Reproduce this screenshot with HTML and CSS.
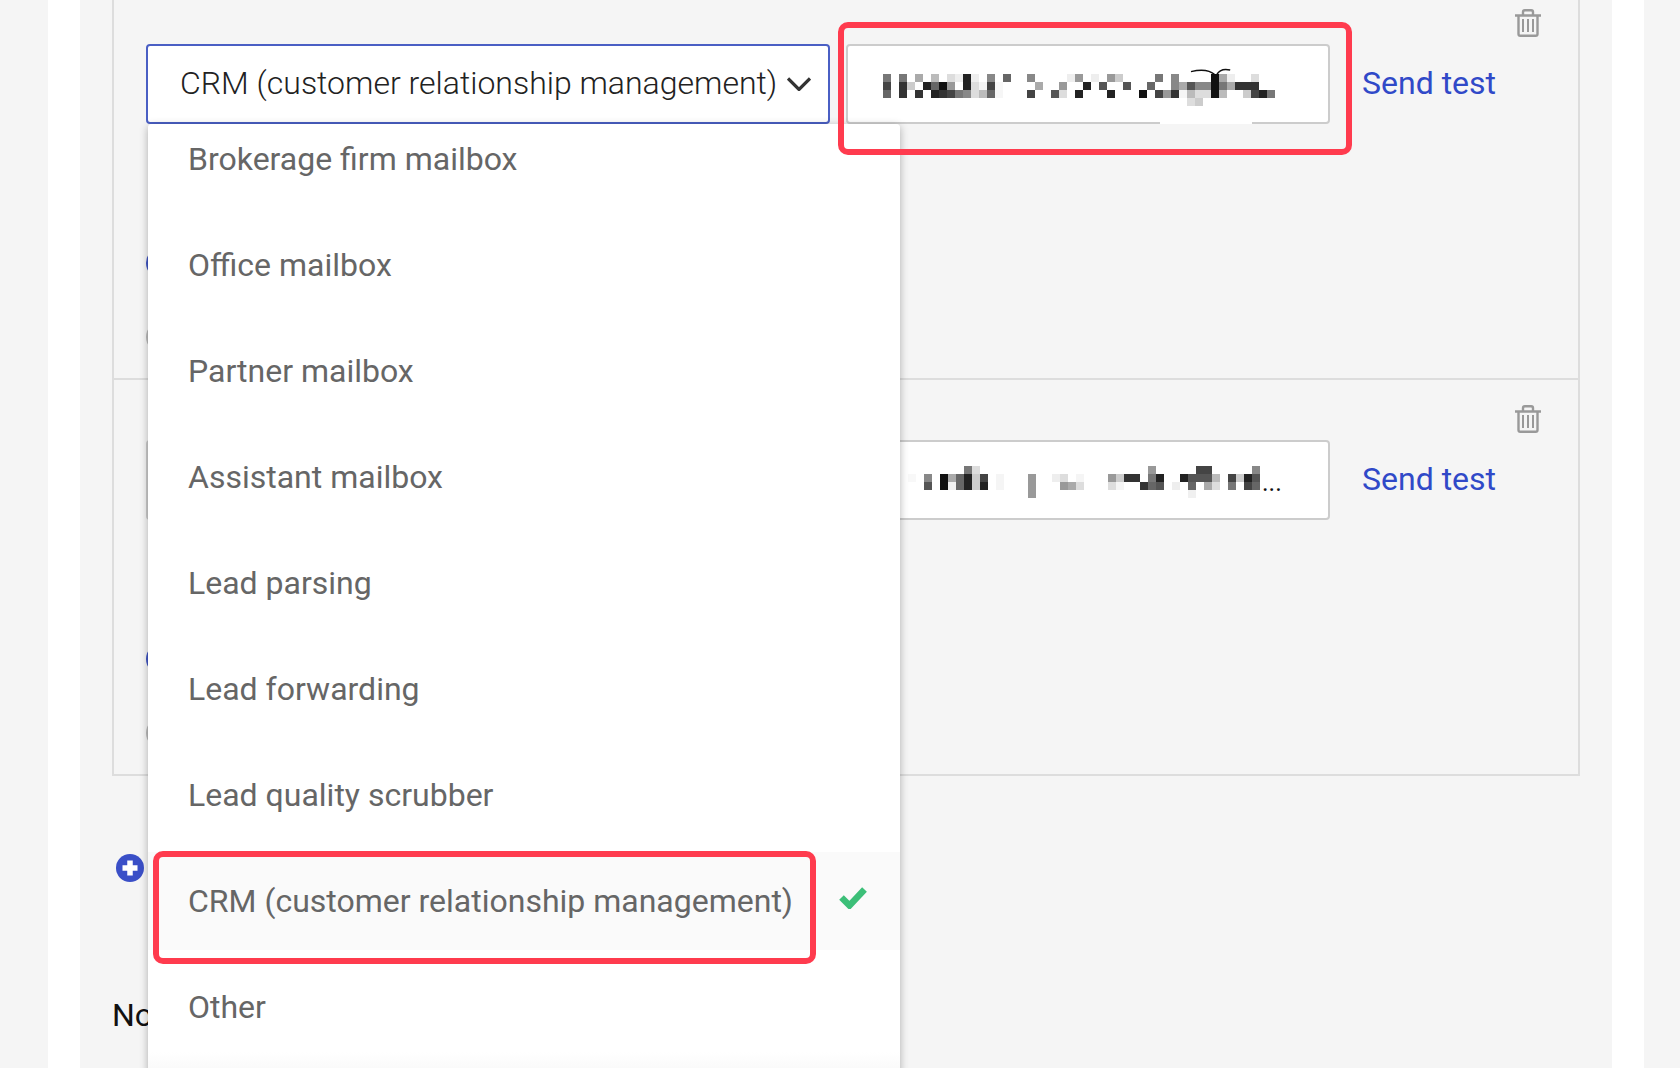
FILE: index.html
```html
<!DOCTYPE html>
<html lang="en">
<head>
<meta charset="utf-8">
<title>Mailbox settings</title>
<link rel="stylesheet" href="styles.css">
</head>
<body>
<div class="page">
  <main class="content">
    <section class="panel">
      <div class="row">
        <button class="trash" aria-label="Delete"><svg width="26" height="28" viewBox="0 0 26 28"><g fill="none" stroke="#999" stroke-width="2.400"><path d="M0 6.500h26M8 6.500V3q0-1.800 1.800-1.800h6.400q1.800 0 1.800 1.800v3.500M3.500 6.500V25q0 1.800 1.800 1.800h15.400q1.800 0 1.800-1.800V6.500"/></g><path d="M8 10v13M13 10v13M18 10v13" stroke="#999" stroke-width="2"/></svg></button>
        <div class="fields">
          <div class="select select-open">
            <span class="select-label">CRM (customer relationship management)</span>
            <svg class="chevron" width="24" height="14" viewBox="0 0 24 14"><path d="M1 1.500l11 11 11-11" fill="none" stroke="#333" stroke-width="3.200"/></svg>
          </div>
          <div class="input input-a">
            <svg class="mosaic" width="416" height="64" viewBox="0 -2.750 52 8">
              <rect x="0" y="0" fill="#777"/><rect x="2" y="0" fill="#777"/><rect x="4" y="0" fill="#aaa"/><rect x="6" y="0" fill="#bbb"/><rect x="8" y="0" fill="#ddd"/><rect x="9" y="0" fill="#eee"/><rect x="10" y="0" fill="#222"/><rect x="11" y="0" fill="#eee"/><rect x="13" y="0" fill="#888"/><rect x="15" y="0" fill="#666"/><rect x="18" y="0" fill="#888"/><rect x="23" y="0" fill="#eee"/><rect x="24" y="0" fill="#999"/><rect x="26" y="0" fill="#eee"/><rect x="28" y="0" fill="#999"/><rect x="29" y="0" fill="#ccc"/><rect x="34" y="0" fill="#777"/><rect x="36" y="0" fill="#888"/><rect x="41" y="0" fill="#111"/><rect x="42" y="0" fill="#aaa"/><rect x="43" y="0" fill="#eee"/><rect x="46" y="0" fill="#ddd"/>
              <rect x="0" y="1" fill="#444"/><rect x="2" y="1" fill="#333"/><rect x="3" y="1" fill="#ccc"/><rect x="5" y="1" fill="#222"/><rect x="6" y="1" fill="#666"/><rect x="7" y="1" fill="#111"/><rect x="8" y="1" fill="#999"/><rect x="10" y="1" fill="#222"/><rect x="11" y="1" fill="#ddd"/><rect x="12" y="1" fill="#f4f4f4"/><rect x="13" y="1" fill="#444"/><rect x="14" y="1" fill="#f8f8f8"/><rect x="19" y="1" fill="#aaa"/><rect x="22" y="1" fill="#999"/><rect x="25" y="1" fill="#222"/><rect x="27" y="1" fill="#555"/><rect x="30" y="1" fill="#555"/><rect x="33" y="1" fill="#666"/><rect x="36" y="1" fill="#888"/><rect x="37" y="1" fill="#aaa"/><rect x="38" y="1" fill="#555"/><rect x="39" y="1" fill="#888"/><rect x="40" y="1" fill="#888"/><rect x="41" y="1" fill="#111"/><rect x="42" y="1" fill="#777"/><rect x="43" y="1" fill="#aaa"/><rect x="44" y="1" fill="#333"/><rect x="45" y="1" fill="#333"/><rect x="46" y="1" fill="#333"/>
              <rect x="0" y="2" fill="#666"/><rect x="2" y="2" fill="#333"/><rect x="4" y="2" fill="#333"/><rect x="6" y="2" fill="#222"/><rect x="7" y="2" fill="#333"/><rect x="8" y="2" fill="#444"/><rect x="9" y="2" fill="#777"/><rect x="10" y="2" fill="#888"/><rect x="11" y="2" fill="#ddd"/><rect x="12" y="2" fill="#bbb"/><rect x="13" y="2" fill="#666"/><rect x="14" y="2" fill="#f6f6f6"/><rect x="18" y="2" fill="#444"/><rect x="21" y="2" fill="#555"/><rect x="22" y="2" fill="#ddd"/><rect x="24" y="2" fill="#222"/><rect x="28" y="2" fill="#222"/><rect x="32" y="2" fill="#111"/><rect x="34" y="2" fill="#444"/><rect x="35" y="2" fill="#999"/><rect x="36" y="2" fill="#333"/><rect x="37" y="2" fill="#f5f5f5"/><rect x="38" y="2" fill="#bbb"/><rect x="39" y="2" fill="#ddd"/><rect x="40" y="2" fill="#ddd"/><rect x="41" y="2" fill="#111"/><rect x="42" y="2" fill="#bbb"/><rect x="45" y="2" fill="#ccc"/><rect x="46" y="2" fill="#444"/><rect x="47" y="2" fill="#222"/><rect x="48" y="2" fill="#777"/>
              <rect x="38" y="3" fill="#ddd"/><rect x="39" y="3" fill="#ccc"/>
              <path d="M38.500-.3q2-.5 3 .4M41.700.1q.5-.9 1.700-.6" fill="none" stroke="#111" stroke-width=".18"/>
            </svg>
            <span class="input-notch"></span>
          </div>
          <a class="send" href="#">Send test</a>
        </div>
        <div class="radios"><span class="radio radio-on"></span><span class="radio"></span></div>
      </div>
      <div class="row">
        <button class="trash" aria-label="Delete"><svg width="26" height="28" viewBox="0 0 26 28"><g fill="none" stroke="#999" stroke-width="2.400"><path d="M0 6.500h26M8 6.500V3q0-1.800 1.800-1.800h6.400q1.800 0 1.800 1.800v3.500M3.500 6.500V25q0 1.800 1.800 1.800h15.400q1.800 0 1.800-1.800V6.500"/></g><path d="M8 10v13M13 10v13M18 10v13" stroke="#999" stroke-width="2"/></svg></button>
        <div class="fields">
          <div class="select"></div>
          <div class="input input-b">
            <svg class="mosaic" width="354" height="64" viewBox="0 -2.250 44.250 8">
              <rect x="7" y="0" fill="#777"/><rect x="8" y="0" fill="#ddd"/><rect x="30" y="0" fill="#999"/><rect x="36" y="0" fill="#444"/><rect x="37" y="0" fill="#444"/><rect x="43" y="0" fill="#888"/>
              <rect x="0" y="1" fill="#f8f8f8"/><rect x="2" y="1" fill="#888"/><rect x="4" y="1" fill="#111"/><rect x="5" y="1" fill="#aaa"/><rect x="6" y="1" fill="#666"/><rect x="7" y="1" fill="#222"/><rect x="8" y="1" fill="#ccc"/><rect x="9" y="1" fill="#444"/><rect x="11" y="1" fill="#f5f5f5"/><rect x="15" y="1" fill="#999"/><rect x="18" y="1" fill="#eee"/><rect x="19" y="1" fill="#ddd"/><rect x="21" y="1" fill="#f5f5f5"/><rect x="25" y="1" fill="#999"/><rect x="26" y="1" fill="#ccc"/><rect x="27" y="1" fill="#333"/><rect x="28" y="1" fill="#333"/><rect x="30" y="1" fill="#777"/><rect x="31" y="1" fill="#222"/><rect x="34" y="1" fill="#222"/><rect x="35" y="1" fill="#555"/><rect x="36" y="1" fill="#555"/><rect x="37" y="1" fill="#555"/><rect x="38" y="1" fill="#bbb"/><rect x="40" y="1" fill="#444"/><rect x="41" y="1" fill="#ccc"/><rect x="42" y="1" fill="#222"/><rect x="43" y="1" fill="#555"/>
              <rect x="2" y="2" fill="#555"/><rect x="4" y="2" fill="#111"/><rect x="5" y="2" fill="#f0f0f0"/><rect x="6" y="2" fill="#666"/><rect x="7" y="2" fill="#222"/><rect x="8" y="2" fill="#ccc"/><rect x="9" y="2" fill="#222"/><rect x="11" y="2" fill="#f5f5f5"/><rect x="15" y="2" fill="#999"/><rect x="19" y="2" fill="#999"/><rect x="20" y="2" fill="#aaa"/><rect x="21" y="2" fill="#ddd"/><rect x="25" y="2" fill="#ddd"/><rect x="26" y="2" fill="#f5f5f5"/><rect x="29" y="2" fill="#333"/><rect x="30" y="2" fill="#666"/><rect x="31" y="2" fill="#555"/><rect x="33" y="2" fill="#eee"/><rect x="35" y="2" fill="#666"/><rect x="37" y="2" fill="#aaa"/><rect x="38" y="2" fill="#ddd"/><rect x="40" y="2" fill="#777"/><rect x="42" y="2" fill="#444"/><rect x="43" y="2" fill="#666"/>
              <rect x="15" y="3" fill="#999"/><rect x="35" y="3" fill="#f0f0f0"/>
            </svg>
            <span class="dots">...</span>
          </div>
          <a class="send" href="#">Send test</a>
        </div>
        <div class="radios"><span class="radio radio-on"></span><span class="radio"></span></div>
      </div>
    </section>
    <button class="add" aria-label="Add"><svg width="28" height="28" viewBox="0 0 28 28"><circle cx="14" cy="14" r="14" fill="#3a4fc7"/><path d="M14 6.500v15M6.500 14h15" stroke="#fff" stroke-width="5.500"/></svg></button>
    <p class="notes">Notes</p>
  </main>
</div>

<div class="menu">
  <ul class="menu-list">
    <li class="menu-item">Brokerage firm mailbox</li>
    <li class="menu-item">Office mailbox</li>
    <li class="menu-item">Partner mailbox</li>
    <li class="menu-item">Assistant mailbox</li>
    <li class="menu-item">Lead parsing</li>
    <li class="menu-item">Lead forwarding</li>
    <li class="menu-item">Lead quality scrubber</li>
    <li class="menu-item menu-item-selected">CRM (customer relationship management)
      <svg class="check" width="28" height="22" viewBox="0 0 28 22"><path d="M2.500 10.500l8 8L25.500 2.500" fill="none" stroke="#3cbf78" stroke-width="6.500"/></svg>
    </li>
    <li class="menu-item">Other</li>
  </ul>
</div>

<div class="mark mark-input"></div>
<div class="mark mark-option"></div>
</body>
</html>
```

FILE: styles.css
```css
* { box-sizing: border-box; }

html, body {
  margin: 0;
  height: 1068px;
  overflow: hidden;
}

body {
  background: #f5f5f5;
  font-family: Roboto, "Liberation Sans", sans-serif;
  font-size: 32px;
  position: relative;
}

.page {
  margin: 0 36px 0 48px;
  padding: 0 32px;
  height: 1068px;
  background: #fff;
}

.content {
  height: 1068px;
  padding: 0 32px;
  background: #f5f5f5;
  overflow: hidden;
}

.panel {
  margin-top: -16px;
  border: 2px solid #ddd;
  border-top: 0;
}

.row {
  position: relative;
  height: 394px;
  padding: 60px 32px 0;
}

.row + .row {
  height: 396px;
  border-top: 2px solid #ddd;
}

.trash {
  position: absolute;
  top: 25px;
  left: 1401px;
  width: 26px;
  height: 28px;
  padding: 0;
  border: 0;
  background: none;
}

.trash svg { display: block; }

.fields {
  display: flex;
  align-items: center;
}

.select {
  display: flex;
  align-items: center;
  justify-content: space-between;
  width: 684px;
  height: 80px;
  padding: 0 17px 0 32px;
  background: #fff;
  border: 2px solid #ccc;
  border-radius: 4px;
}

.select-open { border-color: #4a5fc4; }

.select-label {
  padding-bottom: 2px;
  color: #222;
  font-weight: 300;
  white-space: nowrap;
}

.chevron { flex: none; }

.input {
  position: relative;
  display: flex;
  align-items: center;
  width: 484px;
  height: 80px;
  margin-left: 16px;
  background: #fff;
  border: 2px solid #ccc;
  border-radius: 4px;
}

.input-a { padding-left: 35px; }
.input-b { padding-left: 60px; }

.input-notch {
  position: absolute;
  left: 312px;
  bottom: -2px;
  width: 92px;
  height: 2px;
  background: #fff;
}

.mosaic {
  flex: none;
  display: block;
  filter: blur(.4px);
}

.mosaic rect {
  width: 1px;
  height: 1px;
}

.dots {
  padding-top: 4px;
  color: #111;
  font-size: 25px;
}

.send {
  margin-left: 32px;
  padding-bottom: 2px;
  color: #3049c8;
  text-decoration: none;
  white-space: nowrap;
}

.radios {
  display: flex;
  flex-direction: column;
  gap: 42px;
  margin-top: 123px;
}

.radio {
  width: 32px;
  height: 32px;
  border-radius: 50%;
  background: #bbb;
}

.radio-on { background: #3f55c4; }

.add {
  display: block;
  width: 28px;
  height: 28px;
  margin: 78px 0 0 4px;
  padding: 0;
  border: 0;
  background: none;
}

.add svg { display: block; }

.notes {
  margin: 114px 0 0;
  color: #111;
}

.menu {
  position: absolute;
  left: 148px;
  top: 124px;
  width: 752px;
  height: 960px;
  overflow: hidden;
  background: linear-gradient(#fff 928px, #fafafa 944px);
  border-radius: 4px;
  box-shadow: 0 2px 8px rgba(0, 0, 0, .3);
}

.menu-list {
  margin: -14px 0 0;
  padding: 0;
  list-style: none;
  display: flex;
  flex-direction: column;
  gap: 8px;
}

.menu-item {
  position: relative;
  display: flex;
  align-items: center;
  height: 98px;
  padding-left: 40px;
  color: #666;
  white-space: nowrap;
}

.menu-item-selected { background: #fafafa; }

.check {
  position: absolute;
  left: 691px;
  top: 35px;
}

.mark {
  position: absolute;
  border: 6px solid #ff3b4e;
  border-radius: 10px;
}

.mark-input {
  left: 838px;
  top: 22px;
  width: 514px;
  height: 133px;
}

.mark-option {
  left: 153px;
  top: 851px;
  width: 663px;
  height: 113px;
}
```
